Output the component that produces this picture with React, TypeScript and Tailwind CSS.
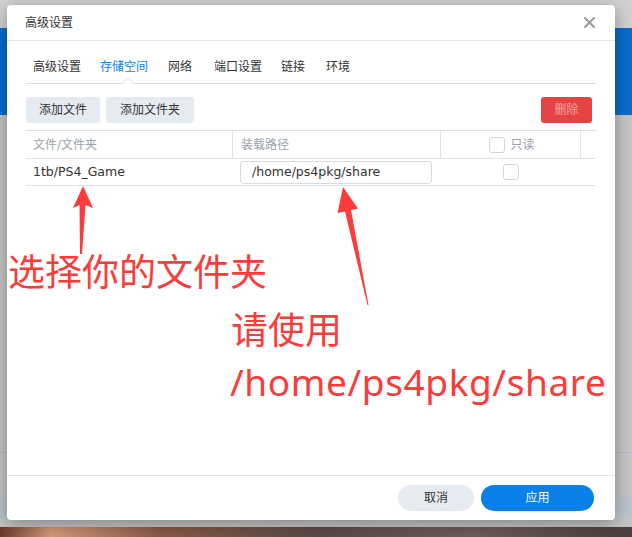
import React from "react";

const ui = { fontFamily: '"DejaVu Sans", "Noto Sans CJK SC", sans-serif' };
const cjk = { fontFamily: '"Noto Sans CJK SC", sans-serif' };
const latin = { fontFamily: '"Noto Sans", "Noto Sans CJK SC", sans-serif' };

function Checkbox() {
  return <div className="w-[16px] h-[16px] rounded-[3px] border border-[#cfd7e0] bg-white" />;
}

export default function App() {
  return (
    <div className="relative w-[632px] h-[537px] overflow-hidden bg-[#cbcbcb]" style={ui}>
      {/* background desktop */}
      <div className="flex flex-col h-full">
        <div className="h-[28px] bg-[#d2d2d2]" />
        <div className="h-[87px] bg-[#0b6ccd]" />
        <div className="flex-1 bg-[#c6c6c6] flex flex-col">
          <div className="h-[337px]" />
          <div className="h-[1px] bg-[#aebccb]" />
          <div className="h-[44px]" />
          <div className="h-[21px] bg-[#bcc6d0]" />
        </div>
        <div className="h-[10px] bg-[linear-gradient(90deg,#6a3a2a_0%,#d49a7c_8%,#8a5a48_25%,#5a4a46_50%,#6e5d58_75%,#4a3e3c_100%)]" />
      </div>

      {/* dialog */}
      <div className="absolute left-[7px] top-[5px] w-[608px] h-[515px] bg-white rounded-[4px] shadow-[0_4px_18px_rgba(0,0,0,0.35)] flex flex-col">
        <div className="h-[36px] flex items-center justify-between pl-[18px] pr-[20px] border-b border-[#dfe5ec]">
          <span className="text-[12px] text-[#333]">高级设置</span>
          <svg width="11" height="11" viewBox="0 0 11 11">
            <path d="M1 1 L10 10 M10 1 L1 10" stroke="#9a9a9a" strokeWidth="2" strokeLinecap="round" />
          </svg>
        </div>

        <div className="relative mx-[19px] h-[43px] border-b border-[#d6dee8] flex items-end pb-[8px] pl-[7px] gap-[19px] text-[12px] text-[#333] leading-[16px]">
          <span>高级设置</span>
          <span className="text-[#0a7fe6]">存储空间</span>
          <span className="ml-[1px]">网络</span>
          <span className="ml-[3px]">端口设置</span>
          <span>链接</span>
          <span className="ml-[2px]">环境</span>
          <svg className="absolute left-[96px] bottom-[-1px]" width="12" height="7" viewBox="0 0 12 7">
            <path d="M0 6.5 L6 0.5 L12 6.5" fill="white" stroke="#d6dee8" strokeWidth="1" />
            <path d="M0.5 7 L11.5 7" stroke="white" strokeWidth="1" />
          </svg>
        </div>

        <div className="flex-1 px-[19px] pt-[13px]">
          <div className="flex items-center h-[26px] text-[12px]">
            <div className="w-[74px] h-[26px] rounded-[3px] bg-[#e6ebf2] text-[#333] flex items-center justify-center">添加文件</div>
            <div className="ml-[6px] w-[88px] h-[26px] rounded-[3px] bg-[#e6ebf2] text-[#333] flex items-center justify-center">添加文件夹</div>
            <div className="ml-auto mr-[4px] w-[51px] h-[26px] rounded-[3px] bg-[#e64444] text-[#f5a3a3] flex items-center justify-center">删除</div>
          </div>

          <div className="mt-[7px] border-t border-[#d6dee8] text-[12px]">
            <div className="flex h-[28px] border-b border-[#dde4ec] text-[#9aa2ab]">
              <div className="w-[207px] border-r border-[#dde4ec] flex items-center pl-[7px]">文件/文件夹</div>
              <div className="w-[208px] border-r border-[#dde4ec] flex items-center pl-[8px]">装载路径</div>
              <div className="w-[140px] border-r border-[#dde4ec] flex items-center justify-center gap-[5px] pl-[3px]">
                <Checkbox />
                <span>只读</span>
              </div>
              <div className="flex-1" />
            </div>
            <div className="flex h-[27px] border-b border-[#dde4ec] text-[#333] text-[12.5px]">
              <div className="w-[207px] flex items-center pl-[7px]">1tb/PS4_Game</div>
              <div className="w-[208px] flex items-center pl-[7px]">
                <div className="w-[192px] h-[23px] rounded-[3px] border border-[#d5dce5] flex items-center pl-[11px]">/home/ps4pkg/share</div>
              </div>
              <div className="w-[140px] flex items-center justify-center">
                <Checkbox />
              </div>
            </div>
          </div>
        </div>

        <div className="h-[45px] border-t border-[#dfe5ec] flex items-start justify-end pt-[9px] pr-[21px] gap-[7px] text-[12px]">
          <div className="w-[76px] h-[26px] rounded-full bg-[#e6ebf2] text-[#333] flex items-center justify-center">取消</div>
          <div className="w-[113px] h-[26px] rounded-full bg-[#0a80e8] text-white flex items-center justify-center">应用</div>
        </div>
      </div>

      {/* annotations */}
      <svg className="absolute left-0 top-0" width="632" height="537" viewBox="0 0 632 537">
        <polygon points="83,186 93,208 85.5,205 82,254 80,254 79.5,205 73,208" fill="#fc3b3b" />
        <polygon points="343,187 358,208.5 351,210 368.5,305 367.5,305 345,211.5 337.5,213" fill="#fc3b3b" />
      </svg>
      <div className="absolute left-[8px] top-[252px] text-[37px] leading-[37px] text-[#fc3b3b] whitespace-nowrap" style={cjk}>选择你的文件夹</div>
      <div className="absolute left-[231px] top-[310px] text-[37px] leading-[37px] text-[#fc3b3b] whitespace-nowrap" style={cjk}>请使用</div>
      <div className="absolute left-[230px] top-[364px] text-[37px] leading-[36px] tracking-[0.6px] text-[#fc3b3b] whitespace-nowrap" style={latin}>/home/ps4pkg/share</div>
    </div>
  );
}
